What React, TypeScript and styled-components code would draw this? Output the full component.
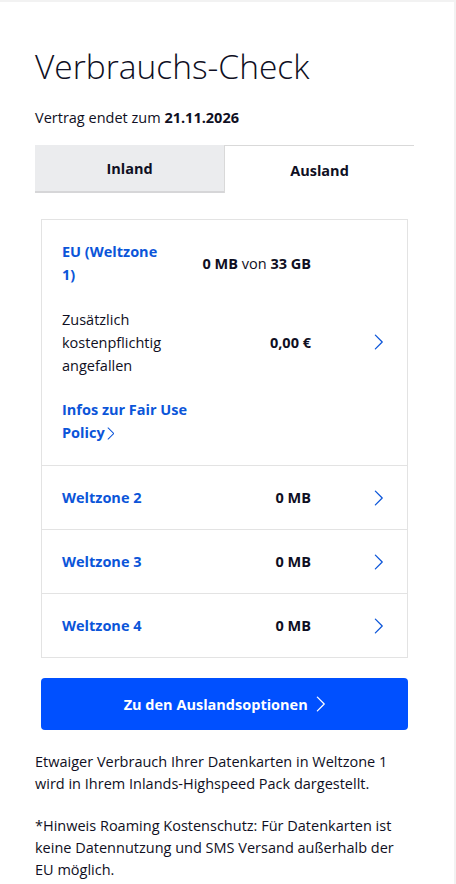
import React from "react";
import styled, { createGlobalStyle } from "styled-components";

const Global = createGlobalStyle`
  html, body { margin: 0; padding: 0; background: #f2f2f2; }
  body { font-family: "Open Sans", "Noto Sans", sans-serif; color: #0f0f23; }
  * { box-sizing: border-box; }
`;

const Page = styled.div`
  margin-top: 2px;
  width: 454px;
  min-height: 882px;
  background: #fff;
  padding: 40px 0 0 35px;
`;

const Title = styled.h1`
  margin: 0;
  font-size: 33.5px;
  font-weight: 300;
  line-height: 48px;
`;

const Contract = styled.p`
  margin: 18px 0 0;
  font-size: 14.5px;
  line-height: 20px;
  b { font-weight: 700; }
`;

const Tabs = styled.div`
  margin-top: 17px;
  width: 379px;
  display: grid;
  grid-template-columns: 189px 190px;
  height: 48px;
`;

const Tab = styled.div<{ $active?: boolean }>`
  display: flex;
  align-items: center;
  justify-content: center;
  font-size: 14.5px;
  font-weight: 700;
  background: ${(p) => (p.$active ? "#fff" : "#ebecee")};
  border-bottom: ${(p) => (p.$active ? "none" : "2px solid #d6d6d8")};
  border-top: ${(p) => (p.$active ? "1px solid #d9d9d9" : "none")};
  border-left: ${(p) => (p.$active ? "1px solid #d9d9d9" : "none")};
  padding-top: ${(p) => (p.$active ? "1px" : "0")};
`;

const Card = styled.div`
  margin: 26px 0 0 6px;
  width: 367px;
  border: 1px solid #e3e3e3;
`;

const Section = styled.div`
  border-top: 1px solid #e3e3e3;
  &:first-child { border-top: none; }
`;

const FirstSection = styled(Section)`
  padding: 20px 0 19px 20px;
  display: flex;
  flex-direction: column;
  gap: 21.5px;
`;

const columns = "106px 143px 1fr";

const Row = styled.div`
  display: grid;
  grid-template-columns: ${columns};
  align-items: center;
`;

const ZoneRow = styled(Section)`
  height: 64px;
  padding-left: 20px;
  display: grid;
  grid-template-columns: ${columns};
  align-items: center;
`;

const Label = styled.div<{ $blue?: boolean }>`
  font-size: 14.5px;
  line-height: 23px;
  font-weight: ${(p) => (p.$blue ? 700 : 400)};
  color: ${(p) => (p.$blue ? "#0b55d9" : "#0f0f23")};
`;

const Value = styled.div`
  font-size: 14.5px;
  line-height: 23px;
  text-align: right;
  white-space: nowrap;
  b { font-weight: 700; }
`;

const ChevronCell = styled.div`
  display: flex;
  justify-content: flex-end;
  padding-right: 23px;
  color: #0b55d9;
`;

const FairLink = styled.div`
  font-size: 14.5px;
  line-height: 23px;
  font-weight: 700;
  color: #0b55d9;
  width: 140px;
`;

const InlineChevron = styled.span`
  display: inline-block;
  vertical-align: -2px;
  margin-left: 2px;
`;

const Button = styled.button`
  margin: 20px 0 0 6px;
  width: 367px;
  height: 52px;
  border: none;
  border-radius: 4px;
  background: #0050ff;
  color: #fff;
  font-family: inherit;
  font-size: 14.5px;
  font-weight: 700;
  display: flex;
  align-items: center;
  justify-content: center;
  gap: 8px;
  cursor: pointer;
`;

const Note = styled.p`
  margin: 21px 0 0;
  width: 375px;
  font-size: 14.5px;
  line-height: 22px;
  & + & { margin-top: 20px; }
`;

const Chevron = ({ size = 14 }: { size?: number }) => (
  <svg width={size * 0.6} height={size} viewBox="0 0 8 14" fill="none">
    <path d="M1 1l6 6-6 6" stroke="currentColor" strokeWidth="1.1" strokeLinecap="round" strokeLinejoin="round" />
  </svg>
);

const zones = ["Weltzone 2", "Weltzone 3", "Weltzone 4"];

export default function App() {
  return (
    <>
      <Global />
      <Page>
        <Title>Verbrauchs-Check</Title>
        <Contract>
          Vertrag endet zum <b>21.11.2026</b>
        </Contract>
        <Tabs>
          <Tab>Inland</Tab>
          <Tab $active>Ausland</Tab>
        </Tabs>
        <Card>
          <FirstSection>
            <Row>
              <Label $blue>EU (Weltzone 1)</Label>
              <Value>
                <b>0 MB</b> von <b>33 GB</b>
              </Value>
              <div />
            </Row>
            <Row>
              <Label>Zusätzlich kostenpflichtig angefallen</Label>
              <Value>
                <b>0,00 €</b>
              </Value>
              <ChevronCell>
                <Chevron size={16} />
              </ChevronCell>
            </Row>
            <FairLink>
              Infos zur Fair Use Policy
              <InlineChevron>
                <Chevron size={13} />
              </InlineChevron>
            </FairLink>
          </FirstSection>
          {zones.map((z) => (
            <ZoneRow key={z}>
              <Label $blue>{z}</Label>
              <Value>
                <b>0 MB</b>
              </Value>
              <ChevronCell>
                <Chevron size={16} />
              </ChevronCell>
            </ZoneRow>
          ))}
        </Card>
        <Button>
          Zu den Auslandsoptionen
          <Chevron size={16} />
        </Button>
        <Note>
          Etwaiger Verbrauch Ihrer Datenkarten in Weltzone 1 wird in Ihrem Inlands-Highspeed Pack dargestellt.
        </Note>
        <Note>
          *Hinweis Roaming Kostenschutz: Für Datenkarten ist keine Datennutzung und SMS Versand außerhalb der EU möglich.
        </Note>
      </Page>
    </>
  );
}
